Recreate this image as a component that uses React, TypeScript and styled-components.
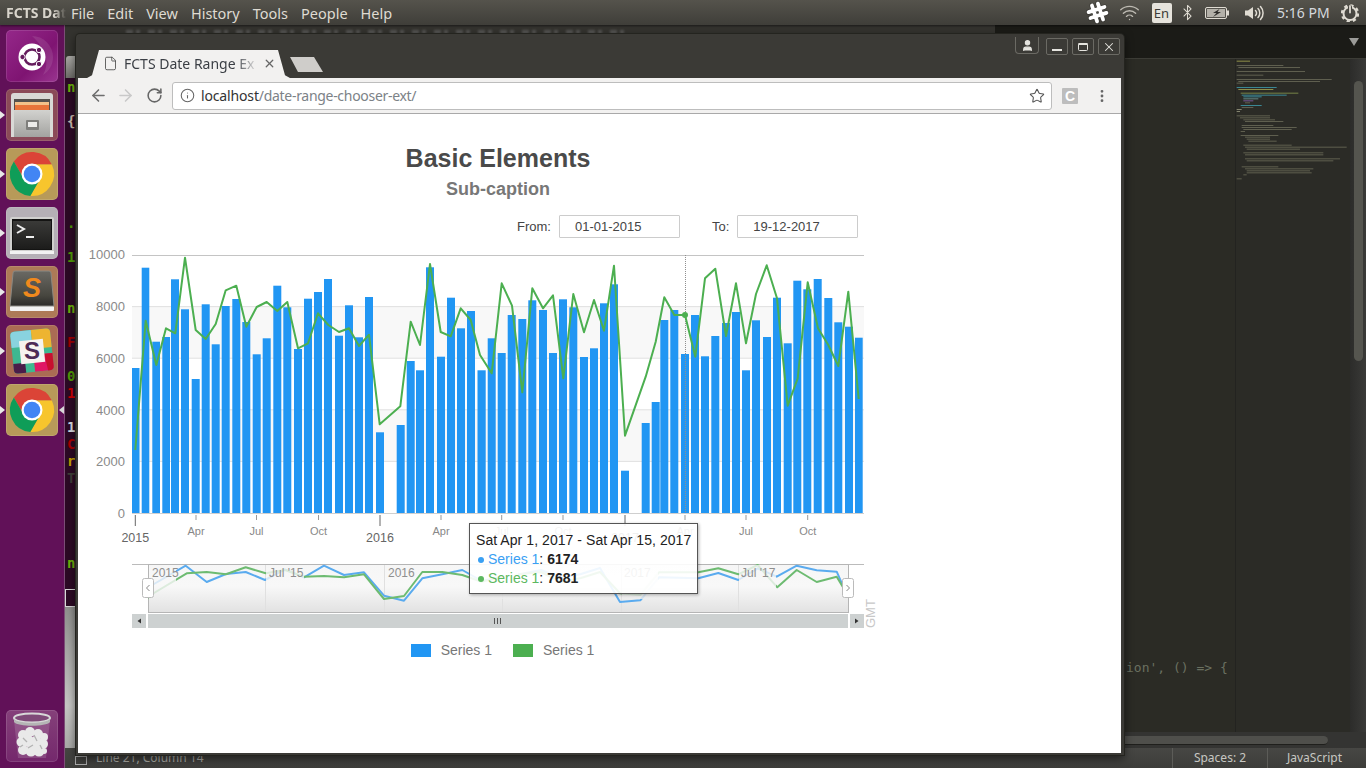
import React from 'react';
import styled, { createGlobalStyle } from 'styled-components';
import { ArrowLeft, ArrowRight, RotateCw, Info, Star, EllipsisVertical, File as FileIcon, X, User, Wifi, Bluetooth } from 'lucide-react';

const Global = createGlobalStyle`
  html, body { margin: 0; padding: 0; width: 1366px; height: 768px; overflow: hidden; background: #2a2a25; }
  * { box-sizing: border-box; }
`;

const Screen = styled.div`
  width: 1366px; height: 768px; display: flex; flex-direction: column; position: relative; overflow: hidden;
  font-family: "Noto Sans", sans-serif;
`;
const TopBar = styled.header`
  height: 25px; flex: none; display: flex; align-items: center; color: #dfdbd2; font-size: 14.5px;
  background: linear-gradient(#55534c, #3f3e39);
  box-shadow: 0 1px 2px rgba(0,0,0,.5); position: relative; z-index: 3;
`;
const AppName = styled.div`
  width: 66px; margin-right: 5px; padding-left: 6px; font-weight: 700; font-size: 14px; overflow: hidden; white-space: nowrap; color: #d8d4cb;
  -webkit-mask-image: linear-gradient(90deg, #000 82%, transparent 100%);
`;
const Menu = styled.nav` display: flex; gap: 13px; `;
const Tray = styled.div` margin-left: auto; display: flex; align-items: center; height: 25px; padding-right: 6px; `;
const TrayIcon = styled.span<{ $w: number; $ml?: number }>`
  width: ${p => p.$w}px; margin-left: ${p => p.$ml || 0}px; flex: none; display: flex; justify-content: center; align-items: center; color: #dfdbd2;
`;
const Lang = styled.span`
  width: 20px; height: 20px; margin: 0 6px 0 2px; background: #e6e3dc; color: #3c3b37; border-radius: 2px;
  font-size: 13px; line-height: 20px; text-align: center;
`;
const Clock = styled.span` width: 52px; margin: 0 11px 0 13px; font-size: 14px; white-space: nowrap; color: #d5d9de; `;

const Body = styled.div` flex: 1; display: flex; min-height: 0; `;
const Dock = styled.aside`
  width: 65px; flex: none; background: #611158; border-right: 1px solid #7c4d76;
  display: flex; flex-direction: column; padding: 5px 0 6px 6px; gap: 7px;
`;
const DockTile = styled.div<{ $bg: string }>`
  width: 52px; height: 52px; border-radius: 5px; background: ${p => p.$bg}; position: relative; flex: none;
  box-shadow: inset 0 0 0 1px rgba(255,255,255,.12);
  svg { display: block; }
`;
const TrashTile = styled(DockTile)` margin-top: auto; `;
const PipLeft = styled.i`
  position: absolute; left: -6px; top: 22px; width: 0; height: 0;
  border-top: 4px solid transparent; border-bottom: 4px solid transparent; border-left: 5px solid #e8e8e8;
`;
const PipRight = styled.i`
  position: absolute; right: -6px; top: 22px; width: 0; height: 0;
  border-top: 4px solid transparent; border-bottom: 4px solid transparent; border-right: 5px solid #d8d8d8;
`;

const Desk = styled.main` flex: 1; display: flex; flex-direction: column; min-width: 0; position: relative; `;
const DeskRow = styled.div` flex: 1; display: flex; min-height: 0; `;
const Terminal = styled.section` width: 930px; flex: none; display: flex; flex-direction: column; background: #2c0a25; `;
const TerminalHead = styled.div`
  height: 53px; flex: none; background: #34332f; display: flex; flex-direction: column; justify-content: space-between; padding: 5px 0 0 1px;
`;
const TerminalTitle = styled.div`
  width: 500px; height: 4px; margin-left: 60px; opacity: .5; filter: blur(.8px);
  background: repeating-linear-gradient(90deg, #777 0 7px, transparent 7px 10px, #777 10px 14px, transparent 14px 22px);
`;
const TerminalTab = styled.div` width: 11px; height: 22px; background: linear-gradient(#a9a8a4, #6d6c68); border-radius: 3px 0 0 0; `;
const TermLines = styled.pre`
  margin: 0; padding: 1px 0 0 2px; font: 700 14px/17px "DejaVu Sans Mono", monospace; height: 511px; flex: none; overflow: hidden;
`;
const TermLine = styled.div<{ $c?: string }>` height: 17px; color: ${p => p.$c || '#4e9a06'}; `;
const TermCursor = styled.div` width: 11px; height: 18px; border: 1px solid #d8d8d8; flex: none; `;
const TermScroll = styled.div` flex: 1; background: linear-gradient(#8f8f8d, #c6c6c4 70%, #a9a9a7); `;

const Editor = styled.section` flex: 1; display: flex; flex-direction: column; min-width: 0; `;
const EditorTabs = styled.div`
  height: 34px; flex: none; background: #1b1b17; border-bottom: 1px solid #3c3c36; display: flex; align-items: center; justify-content: flex-end; padding-right: 7px;
`;
const TabsArrow = styled.i`
  width: 0; height: 0; border-left: 5px solid transparent; border-right: 5px solid transparent; border-top: 8px solid #9b9b98;
`;
const EditorMain = styled.div` flex: 1; display: flex; min-height: 0; `;
const CodeCol = styled.div`
  flex: 1; background: #2b2b25; padding: 600px 0 0 131px; color: #6a7060; white-space: nowrap; overflow: hidden;
  font: 13px/17px "DejaVu Sans Mono", monospace; border-right: 1px solid #232320;
`;
const MiniMap = styled.div` width: 114px; flex: none; background: #2b2b26; svg { display: block; filter: blur(.4px); opacity: .8; } `;
const VScroll = styled.div` width: 16px; flex: none; background: linear-gradient(90deg, #2c2c2a, #3a3a38); padding: 22px 3px 0 4px; `;
const VThumb = styled.div` height: 280px; border-radius: 5px; background: #55554f; `;
const HScroll = styled.div` height: 16px; flex: none; background: #343432; padding: 4px 38px 0 0; `;
const HThumb = styled.div` height: 9px; border-radius: 0 5px 5px 0; background: #4f4f4b; border-bottom: 1px solid #1f1f1c; `;
const StatusBar = styled.footer`
  height: 20px; flex: none; display: flex; align-items: stretch; background: linear-gradient(#474744, #3d3d3a);
  color: #c7c7c2; font-size: 12px; line-height: 20px; padding-left: 10px;
`;
const StatusIcon = styled.span` width: 12px; height: 9px; border: 1px solid #aaa; margin: 8px 9px 0 0; `;
const StatusText = styled.span` color: #a7a7a2; `;
const StatusCell = styled.span<{ $w: number; $auto?: boolean; $pr?: number }>`
  width: ${p => p.$w}px; padding-right: ${p => p.$pr || 0}px; text-align: center; border-left: 1px solid #5c5c58; ${p => p.$auto ? 'margin-left: auto;' : ''}
`;

const Win = styled.section`
  position: absolute; left: 11px; top: 9px; width: 1048px; height: 721px;
  background: #3b3a36; border: 2px solid #3b3a36; border-right-width: 3px; border-radius: 4px 4px 0 0;
  box-shadow: 0 0 0 1px #24241f, 0 3px 10px rgba(0,0,0,.6);
  display: flex; flex-direction: column;
`;
const TabRow = styled.div` height: 42px; flex: none; display: flex; align-items: flex-end; padding-left: 9px; `;
const Tab = styled.div`
  width: 203px; height: 28px; background: #f2f1f0; color: #3b3f45; font-size: 14px; display: flex; align-items: center; padding: 0 0 2px 16px;
  clip-path: polygon(0 100%, 5px 90%, 12px 0, 191px 0, 198px 90%, 100% 100%);
`;
const TabTitle = styled.span`
  width: 131px; margin-left: 6px; overflow: hidden; white-space: nowrap;
  -webkit-mask-image: linear-gradient(90deg, #000 85%, rgba(0,0,0,.15) 100%);
`;
const TabClose = styled.span` margin-left: 8px; display: flex; color: #666; `;
const NewTab = styled.div`
  width: 33px; height: 15px; margin: 0 0 6px 0; background: #cfcdca;
  clip-path: polygon(0 0, 24px 0, 100% 100%, 8px 100%);
`;
const WinButtons = styled.div` margin-left: auto; align-self: flex-start; display: flex; padding: 2px 1px 0 0; gap: 4px; `;
const WinBtn = styled.button`
  width: 22px; height: 17px; padding: 0; margin: 0; background: #3b3a36; color: #e5e4df; border: 1px solid #6b6a64; border-radius: 2px;
  display: flex; align-items: center; justify-content: center;
`;
const ProfileBtn = styled(WinBtn)` width: 24px; height: 17px; margin: -1px 3px 0 0; border-top: 0; border-radius: 0 0 4px 4px; `;
const Toolbar = styled.div`
  height: 36px; flex: none; background: #f2f1f0; border-bottom: 1px solid #a9a9a9; display: flex; align-items: center; padding-left: 10px;
`;
const NavBtn = styled.span<{ $c: string; $ml: number }>`
  width: 20px; height: 20px; display: flex; align-items: center; justify-content: center; color: ${p => p.$c}; margin-left: ${p => p.$ml}px;
`;
const Omni = styled.div`
  width: 880px; height: 28px; margin-left: 8px; background: #fff; border: 1px solid #bdbdbd; border-radius: 3px; display: flex; align-items: center; padding: 0 6px 0 7px; color: #666;
  font-size: 14px;
`;
const Host = styled.span` margin-left: 6px; color: #333; letter-spacing: -.15px; `;
const Path = styled.span` color: #7c8287; letter-spacing: -.3px; `;
const OmniStar = styled.span` margin-left: auto; display: flex; color: #555; `;
const ExtC = styled.span`
  width: 16px; height: 16px; margin-left: 10px; background: #bdbdbd; color: #fff; font: 700 14px/16px "Liberation Sans", sans-serif; text-align: center; border-radius: 1px;
`;
const Page = styled.div`
  flex: 1; background: #fff; font-family: "Liberation Sans", Arial, sans-serif; position: relative; min-height: 0;
`;
const ChartBox = styled.div` width: 840px; display: flex; flex-direction: column; padding-top: 29px; position: relative; `;
const Caption = styled.h1` margin: 0; font: 700 25px/30px "Liberation Sans", sans-serif; color: #4a4a4a; text-align: center; `;
const SubCaption = styled.h2` margin: 5px 0 0; font: 700 18px/22px "Liberation Sans", sans-serif; color: #777; text-align: center; `;
const Range = styled.div` margin-top: 15px; height: 23px; display: flex; align-items: center; font-size: 13px; color: #444; padding-left: 439px; `;
const RangeInput = styled.div<{ $ml: number }>`
  width: 121px; height: 23px; margin-left: ${p => p.$ml}px; border: 1px solid #ccc; border-radius: 1px; padding-left: 15px; line-height: 22px; color: #444;
`;
const RangeLabel = styled.span<{ $ml?: number }>` margin-left: ${p => p.$ml || 0}px; `;
const ChartSvg = styled.svg` display: block; margin-top: 7px; font-family: "Liberation Sans", sans-serif; `;
const Legend = styled.div` margin-top: 8px; height: 14px; display: flex; justify-content: center; gap: 21px; padding-left: 9px; font-size: 14px; color: #777; line-height: 14px; `;
const LegendItem = styled.div` display: flex; align-items: center; gap: 10px; `;
const Swatch = styled.i<{ $c: string }>` width: 20px; height: 13px; background: ${p => p.$c}; display: block; `;
const Tooltip = styled.div`
  position: absolute; left: 391px; top: 409px; width: 229px; height: 71px; padding: 6px 0 0 6px;
  background: rgba(255,255,255,.9); border: 1px solid #555; box-shadow: 1px 1px 3px rgba(0,0,0,.3);
  font-size: 14px; line-height: 19.5px; color: #222; white-space: nowrap;
`;
const TipHead = styled.div` height: 19.5px; padding-top: 1px; letter-spacing: .06px; `;
const TipRow = styled.div` display: flex; align-items: center; `;
const TipDot = styled.i<{ $c: string }>` width: 6px; height: 6px; border-radius: 50%; background: ${p => p.$c}; margin: 1px 4px 0 2px; `;
const TipName = styled.span<{ $c: string }>` color: ${p => p.$c}; `;
const TipValue = styled.b` color: #222; margin-left: 4px; `;

const BLUE = '#2196f3';
const GREEN = '#4caf50';
const bars: [number, number, number][] = [
  [132, 139.5, 368], [141.7, 149.3, 267.7], [152.3, 160, 341.7], [162.3, 170, 337], [171, 179, 279.3], [181, 189, 309.3], [191.7, 199.7, 379], [201.7, 209.7, 304.3], [211.7, 219.7, 344.3], [221.7, 229.7, 306],
  [232.3, 240.3, 299], [242.3, 250.3, 322], [252.7, 260.7, 354.3], [262.7, 270.7, 338.3], [273.3, 281.3, 285.7], [283.3, 291.3, 307.3], [294, 302, 349], [304, 312, 298.7], [314, 322, 292], [324, 332, 279],
  [335, 343, 335.7], [345, 353, 305.3], [355, 363, 337.3], [365, 373, 297], [376, 384, 432.3], [396.7, 404.7, 425], [406.7, 414.7, 361], [416, 424, 370.3], [426, 434, 267.3], [437, 445, 356.7],
  [447, 455, 297.7], [457, 465, 328.3], [467, 475, 311], [477.5, 485.7, 370.3], [487.7, 495.7, 338.3], [497.7, 505.7, 353], [507.7, 515.7, 315], [518.3, 526.3, 319], [528.3, 536.3, 300.3], [539, 547, 310],
  [549, 557, 353], [559, 567, 299.3], [569.3, 577.3, 307.3], [580, 588, 357], [590, 598, 348.3], [600, 608, 303.3], [610, 618, 284.3], [621, 629, 470.7], [641.7, 649.7, 423], [651.7, 659.7, 402],
  [660.3, 668.3, 320], [670.3, 678.3, 310], [681, 689, 354], [691, 699, 315], [701, 709, 356.3], [711.3, 719.3, 336], [722, 730, 323], [732, 740, 312], [742, 750, 370.3], [752, 760, 320.3],
  [763, 771, 337], [773, 781, 297.7], [783.7, 791.7, 343.3], [793.3, 801.3, 280.7], [803.3, 811.3, 289.3], [813.7, 821.7, 279], [824.3, 832.3, 298], [834.3, 842.3, 322.3], [845, 853, 326.7], [855, 862.7, 337.7],
];
const line = '135.3,450 145.7,320.7 156.3,365 166,328.3 175.3,333.3 185,257.7 195.7,330 205.7,339 215.7,324 225.7,290.3 236.3,285.7 246.3,326.7 256.7,307 266.7,302 277.3,311 287.3,302 298,348.3 308,343.3 318,313.3 328.3,325 339,332 349,328.3 359,346 369,334.7 379.7,424.3 400.3,406.3 410.7,321.7 420,345 430,264 440.7,332 450.7,336.3 460.7,308.3 470.7,320 480,355 491.7,373.3 501.7,283.3 512,305.7 522.3,392.3 532.3,288.3 543,308.3 553,295.3 563.3,378.3 573.3,294 584,332.3 594,300 604,330.7 614,265.7 625,435.7 645.7,376.7 655.7,341.7 664.3,297.3 674.3,315 685,315 695.3,356.7 705,278.3 715.3,268.7 726,336 736,283.3 746,343.3 756,294 766.7,265.3 777,298.3 787.7,405.7 797.7,378.3 807.7,282.3 818,328.3 828.3,345 838.3,366 848.3,291.7 858.7,399';
const navBlue = '148,588 154,584 185.7,565.7 206.7,582 226,574 245.7,572 265,580 285,569.3 304,577.3 324,565.7 344,575 364,572.3 384,595.7 404,600.7 422.3,578.3 442.3,574.3 462.3,570 481.7,581 501,577 521,574 541,570 561,578 581,574 600,568 620,602 640.3,600.3 659,577.3 698.3,578.3 718.3,573 738.3,580 757.7,568.3 776.7,576.7 796.7,565.7 816.7,570.3 836.7,571.7 843.3,586.7';
const navGreen = '148,598 154,593 186.7,573.3 206.7,572 226,574.3 245.7,567.3 265.7,573.3 285,570 304,576.7 324,576 344,577.3 364,574.3 384,599 404,596 422.3,572 442.3,572 462.3,575 481.7,581.7 501,577 521,574 541,572 561,582 581,578 600,572 620,593.3 640.3,595 659,572.3 698.3,572.3 718.3,568.3 738.3,574.3 757.7,565 777.3,587.3 796.7,570 816.7,582 836.7,576.7 842.7,586.7';

const gridY = [306.6, 358.2, 409.8, 461.4];
const minorTicks: [number, string][] = [[196, 'Apr'], [256.5, 'Jul'], [318.5, 'Oct'], [441, 'Apr'], [501.7, 'Jul'], [563, 'Oct'], [685, 'Apr'], [746, 'Jul'], [807.7, 'Oct']];
const majorTicks: [number, string][] = [[135.3, '2015'], [380, '2016'], [625, '2017']];

function Chart() {
  return (
    <ChartSvg width={840} height={390} viewBox="78 245 840 390">
      <defs>
        <linearGradient id="navBg" gradientUnits="userSpaceOnUse" x1="0" x2="0" y1="565" y2="612">
          <stop offset="0" stopColor="#f6f6f6" />
          <stop offset=".45" stopColor="#f8f8f8" />
          <stop offset="1" stopColor="#e2e2e2" />
        </linearGradient>
      </defs>
      <rect x={132} y={306.6} width={732} height={51.6} fill="#f8f8f8" />
      <rect x={132} y={409.8} width={732} height={51.6} fill="#f8f8f8" />
      {gridY.map(y => <line key={y} x1={132} x2={864} y1={y} y2={y} stroke="#e0e0e0" />)}
      <line x1={132} x2={864} y1={255.5} y2={255.5} stroke="#c4c4c4" />
      {[[10000, 258.5], [8000, 311], [6000, 362.5], [4000, 414.5], [2000, 466], [0, 518]].map(([v, y]) => (
        <text key={v} x={125} y={y} textAnchor="end" fontSize={13} fill="#8a8a8a">{v}</text>
      ))}
      {bars.map(([a, b, t]) => <rect key={a} x={a} y={t} width={b - a} height={513 - t} fill={BLUE} />)}
      <line x1={132} x2={864} y1={513.5} y2={513.5} stroke="#cfcfcf" />
      <line x1={685.5} x2={685.5} y1={255} y2={513} stroke="#8f8f8f" strokeDasharray="1 1" />
      <polyline points={line} fill="none" stroke={GREEN} strokeWidth={2} strokeLinejoin="round" />
      <circle cx={685} cy={315} r={3} fill={GREEN} />
      {minorTicks.map(([x, l]) => (
        <g key={x}>
          <line x1={x} x2={x} y1={515} y2={520} stroke="#999" />
          <text x={x} y={535} textAnchor="middle" fontSize={11} fill="#888">{l}</text>
        </g>
      ))}
      {majorTicks.map(([x, l]) => (
        <g key={x}>
          <line x1={x} x2={x} y1={515} y2={526} stroke="#666" />
          <text x={x} y={542} textAnchor="middle" fontSize={12.5} fill="#666">{l}</text>
        </g>
      ))}
      <line x1={132} x2={864} y1={564.5} y2={564.5} stroke="#bbb" />
      <rect x={148.5} y={564.5} width={700} height={48} fill="url(#navBg)" stroke="#b5b5b5" />
      {[265, 384, 502, 621, 738].map(x => <line key={x} x1={x + .5} x2={x + .5} y1={565} y2={612} stroke="#e0e0e0" />)}
      <polyline points={navBlue} fill="none" stroke="#5aabef" strokeWidth={2} strokeLinejoin="round" />
      <polyline points={navGreen} fill="none" stroke="#6dbb71" strokeWidth={2} strokeLinejoin="round" />
      {[[149, 27], [266, 38], [502, 16], [622, 36], [739, 37]].map(([x, w]) => (
        <rect key={x} x={x} y={565} width={w} height={34} fill="url(#navBg)" opacity={.8} />
      ))}
      {[[152, '2015'], [269, "Jul '15"], [388, '2016'], [624, '2017'], [741, "Jul '17"]].map(([x, l]) => (
        <text key={x} x={x} y={577} fontSize={12} fill="#8f8f8f">{l}</text>
      ))}
      <rect x={142.5} y={578.5} width={11} height={19} rx={2} fill="#fff" stroke="#bbb" />
      <path d="M149.5 585l-3 3 3 3" fill="none" stroke="#888" />
      <rect x={842.5} y={578.5} width={11} height={19} rx={2} fill="#fff" stroke="#bbb" />
      <path d="M846.5 585l3 3-3 3" fill="none" stroke="#888" />
      <rect x={132} y={614} width={14} height={14} fill="#cdd1d1" />
      <path d="M141 618.5v5l-3.5-2.5z" fill="#333" />
      <rect x={148} y={614} width={700} height={14} fill="#cdd1d1" />
      <path d="M494.5 618v6M497.5 618v6M500.5 618v6" stroke="#555" />
      <rect x={850} y={614} width={14} height={14} fill="#cdd1d1" />
      <path d="M855 618.5v5l3.5-2.5z" fill="#333" />
      <text x={875} y={628} fontSize={13} fill="#c8c8c8" transform="rotate(-90 875 628)">GMT</text>
    </ChartSvg>
  );
}

const ChromeLogo = () => (
  <g transform="translate(26 26)">
    {[[0, '#db4437'], [120, '#f7c52d'], [240, '#0f9d58']].map(([a, c]) => (
      <path key={String(a)} transform={`rotate(${a})`} fill={String(c)} d="M0,-9.5 L19.85,-9.5 A22,22 0 0 0 -18.16,-12.44 L-8.23,4.75 Z" />
    ))}
    <circle r={10.5} fill="#fff" />
    <circle r={8.3} fill="#4285f4" />
  </g>
);
const minimapLines: [number, number, number, string][] = [
  [92, 350, 390, '#a8a850'], [105, 350, 490, '#6d6d5a'], [111, 355, 540, '#6d6d5a'], [123, 350, 555, '#6d6d5a'], [134, 350, 430, '#6d6d5a'], [147, 350, 635, '#6d6d5a'], [153, 355, 600, '#6d6d5a'], [158, 350, 370, '#6d6d5a'],
  [171, 350, 470, '#3f9fb0'], [177, 355, 460, '#a8a850'], [188, 362, 535, '#8a9a50'], [194, 365, 500, '#3f9fb0'], [199, 370, 425, '#3f9fb0'], [205, 370, 415, '#6fa0a0'], [211, 370, 400, '#8a62b0'], [217, 375, 390, '#6d6d5a'], [225, 362, 425, '#3f9fb0'], [231, 365, 400, '#6d6d5a'], [237, 350, 365, '#9a9a80'], [243, 350, 360, '#9a9a80'],
  [256, 350, 450, '#6d6d5a'], [262, 360, 450, '#6d6d5a'], [268, 370, 465, '#6d6d5a'], [273, 375, 490, '#6d6d5a'], [285, 365, 460, '#6d6d5a'], [291, 365, 530, '#6d6d5a'], [297, 370, 515, '#6d6d5a'], [303, 362, 375, '#6d6d5a'], [315, 362, 475, '#6d6d5a'], [320, 375, 450, '#6d6d5a'], [326, 380, 450, '#6d6d5a'], [332, 385, 470, '#6d6d5a'],
  [344, 370, 515, '#6d6d5a'], [350, 375, 680, '#6d6d5a'], [356, 380, 540, '#6d6d5a'], [367, 370, 610, '#6d6d5a'], [373, 375, 610, '#6d6d5a'], [385, 375, 660, '#6d6d5a'], [391, 380, 640, '#6d6d5a'], [409, 365, 475, '#6d6d5a'], [415, 375, 580, '#6d6d5a'], [421, 380, 570, '#6d6d5a'], [427, 380, 575, '#6d6d5a'], [433, 370, 380, '#6d6d5a'], [445, 350, 365, '#6d6d5a'],
];
const termLines: Record<number, [string, string]> = {
  0: ['n', '#6cb30a'], 2: ['{', '#c9b8a8'], 8: ['.', '#4e9a06'], 10: ['1', '#4e9a06'], 13: ['n', '#6cb30a'], 15: ['F', '#a00000'], 17: ['0', '#4e9a06'], 18: ['1', '#cc0000'], 20: ['1', '#d8dbe0'], 21: ['C', '#aa0000'], 22: ['r', '#c4a000'], 23: ['T', '#3f3f38'], 28: ['n', '#6cb30a'],
};
const paper: [number, number, number][] = [[17, 25, 5], [24, 22, 5], [32, 24, 5], [38, 27, 4], [15, 32, 4.5], [22, 31, 6], [30, 32, 6], [37, 34, 5], [17, 40, 5], [25, 41, 5.5], [33, 41, 5.5], [38, 41, 3]];

export default function App() {
  return (
    <Screen>
      <Global />
      <TopBar>
        <AppName>FCTS Dat</AppName>
        <Menu>
          {['File', 'Edit', 'View', 'History', 'Tools', 'People', 'Help'].map(m => <span key={m}>{m}</span>)}
        </Menu>
        <Tray>
          <TrayIcon $w={24}>
            <svg width="23" height="23" viewBox="0 0 22 22">
              <g transform="rotate(-18 11 11)" strokeLinecap="round">
                <path d="M8 3v16M14 3v16M3 8h16M3 14h16" stroke="#2c2b28" strokeWidth="5" opacity=".5" />
                <path d="M8 3v16M14 3v16M3 8h16M3 14h16" stroke="#fff" strokeWidth="3.6" />
              </g>
            </svg>
          </TrayIcon>
          <TrayIcon $w={40}><Wifi size={21} strokeWidth={1.6} color="#bdbab2" /></TrayIcon>
          <Lang>En</Lang>
          <TrayIcon $w={20}><Bluetooth size={17} strokeWidth={1.5} /></TrayIcon>
          <TrayIcon $w={38}>
            <svg width="24" height="12" viewBox="0 0 24 12">
              <rect x=".5" y=".5" width="21" height="11" rx="1.5" fill="#55534d" stroke="#dfdbd2" />
              <rect x="22" y="3.5" width="2" height="5" fill="#dfdbd2" />
              <rect x="2" y="2" width="18" height="8" fill="#b4b1a9" />
              <path d="M14.5 2L8 6h3.5L8 10l8-5h-3.5z" fill="#2f2e2b" />
            </svg>
          </TrayIcon>
          <TrayIcon $w={20} $ml={8.5}>
            <svg width="20" height="18" viewBox="0 0 20 18" fill="none" stroke="#dfdbd2" strokeWidth="1.5" strokeLinecap="round">
              <path d="M1 6.5h3L9 3v12l-5-3.5H1z" fill="#dfdbd2" stroke="none" />
              <path d="M11.5 6.5a3.5 3.5 0 0 1 0 5" />
              <path d="M14 4.5a6.5 6.5 0 0 1 0 9" />
              <path d="M16.5 2.5a9.5 9.5 0 0 1 0 13" />
            </svg>
          </TrayIcon>
          <Clock>5:16 PM</Clock>
          <TrayIcon $w={20}>
            <svg width="18" height="18" viewBox="0 0 18 18" fill="none" stroke="#dfdbd2" strokeLinecap="round">
              <circle cx="9" cy="9.5" r="6.5" strokeWidth="2" />
              <circle cx="9" cy="9.5" r="8" strokeWidth="2.4" strokeDasharray="3.2 3.1" strokeLinecap="butt" />
              <path d="M9 3v6" stroke="#45443f" strokeWidth="4" />
              <path d="M9 2v6.5" strokeWidth="1.8" />
            </svg>
          </TrayIcon>
        </Tray>
      </TopBar>
      <Body>
        <Dock>
          <DockTile $bg="linear-gradient(135deg,#95288a,#7f1472 60%,#9a3590)">
            <svg width="52" height="52" viewBox="0 0 52 52">
              <path d="M26 6a21 21 0 0 1 21 21c0 8-4 14-10 18 6-10 5-24-11-39z" fill="#fff" opacity=".1" />
              <circle cx="26" cy="27" r="13.5" fill="#fff" />
              <circle cx="26" cy="27" r="7.5" fill="none" stroke="#651c5d" strokeWidth="2.6" />
              <circle cx="33" cy="20" r="2.7" fill="#651c5d" stroke="#fff" />
              <circle cx="16.5" cy="27" r="2.7" fill="#651c5d" stroke="#fff" />
              <circle cx="33" cy="34" r="2.7" fill="#651c5d" stroke="#fff" />
            </svg>
          </DockTile>
          <DockTile $bg="#8b4a58">
            <PipLeft />
            <svg width="52" height="52" viewBox="0 0 52 52">
              <defs>
                <linearGradient id="drawer" x1="0" x2="0" y1="0" y2="1"><stop offset="0" stopColor="#d2d2cf" /><stop offset="1" stopColor="#a3a3a0" /></linearGradient>
              </defs>
              <path d="M5 7a3 3 0 0 1 3-3h36a3 3 0 0 1 3 3v41H5z" fill="#d9d9d6" />
              <rect x="8" y="10" width="36" height="12" fill="#55524e" />
              <rect x="9" y="13" width="34" height="3" fill="#f3c28a" />
              <rect x="9" y="16" width="34" height="5" fill="#e8743a" />
              <rect x="8" y="21" width="36" height="27" fill="url(#drawer)" />
              <rect x="20" y="31" width="13" height="10" rx="1" fill="#7f7f7c" />
              <rect x="22" y="33" width="9" height="5" fill="#ececea" />
            </svg>
          </DockTile>
          <DockTile $bg="#b79a59"><PipLeft /><svg width="52" height="52" viewBox="0 0 52 52"><ChromeLogo /></svg></DockTile>
          <DockTile $bg="#b5b0b6">
            <PipLeft />
            <svg width="52" height="52" viewBox="0 0 52 52">
              <defs>
                <linearGradient id="tscreen" x1="0" x2="0" y1="0" y2="1"><stop offset="0" stopColor="#3a3a38" /><stop offset="1" stopColor="#1c1c1b" /></linearGradient>
              </defs>
              <rect x="4" y="10" width="44" height="37" rx="2" fill="#d0d0ce" />
              <rect x="4" y="44" width="44" height="3" fill="#f2f2f2" />
              <rect x="6" y="12" width="40" height="31" fill="#141413" />
              <rect x="7" y="14" width="38" height="28" fill="url(#tscreen)" />
              <path d="M11 18l7 4-7 4" fill="none" stroke="#eee" strokeWidth="2" />
              <path d="M20 30h8" stroke="#eee" strokeWidth="2" />
            </svg>
          </DockTile>
          <DockTile $bg="#ad7a57">
            <PipLeft />
            <svg width="52" height="52" viewBox="0 0 52 52">
              <defs>
                <linearGradient id="subl" x1="0" x2="0" y1="0" y2="1"><stop offset="0" stopColor="#6a6964" /><stop offset=".7" stopColor="#47463f" /><stop offset="1" stopColor="#2b2a28" /></linearGradient>
              </defs>
              <rect x="4" y="40" width="44" height="5" rx="1" fill="#f2f2f2" />
              <path d="M9 5h34a2 2 0 0 1 2 2l3 33H4l3-33a2 2 0 0 1 2-2z" fill="url(#subl)" stroke="#8a8983" />
              <text x="26" y="31" textAnchor="middle" fontFamily="Liberation Sans, sans-serif" fontWeight="700" fontStyle="italic" fontSize="27" fill="#f0891d">S</text>
            </svg>
          </DockTile>
          <DockTile $bg="#aa6c54">
            <PipLeft />
            <svg width="52" height="52" viewBox="0 0 52 52">
              <g transform="rotate(-6 26 26)">
                <rect x="6" y="5" width="40" height="42" rx="4" fill="#3eb890" />
                <path d="M6 9a4 4 0 0 1 4-4h17v16H6z" fill="#89d3df" />
                <path d="M27 5h15a4 4 0 0 1 4 4v15H27z" fill="#edb431" />
                <path d="M27 30h19v13a4 4 0 0 1-4 4H27z" fill="#e01765" />
                <path d="M38 30h8v13a4 4 0 0 1-4 4h-2z" fill="#c8102e" />
                <path d="M6 37h12v10h-8a4 4 0 0 1-4-4z" fill="#4a1d4a" />
                <rect x="14" y="15" width="24" height="23" fill="#f6f3ef" />
              </g>
              <text x="26" y="34" textAnchor="middle" fontFamily="Liberation Sans, sans-serif" fontWeight="700" fontSize="24" fill="#4d2a55">S</text>
            </svg>
          </DockTile>
          <DockTile $bg="#b79a59"><PipLeft /><PipRight /><svg width="52" height="52" viewBox="0 0 52 52"><ChromeLogo /></svg></DockTile>
          <TrashTile $bg="linear-gradient(#85407a,#74286c)">
            <svg width="52" height="52" viewBox="0 0 52 52">
              <path d="M8 10l4 38h28l4-38z" fill="#fff" opacity=".14" />
              {paper.map(([x, y, r]) => <circle key={`${x}-${y}`} cx={x} cy={y} r={r} fill="#e9e9e9" />)}
              <path d="M17 28l4 4M28 25l3 6M22 38l5-3M34 35l2 4M14 37l3-2" stroke="#b2b2b2" strokeWidth="1.3" />
              <ellipse cx="26" cy="8" rx="18" ry="4.5" fill="#7f4a78" stroke="#d8d8d8" strokeWidth="2" />
              <path d="M8 9c4 5 32 5 36 0v3c-4 5-32 5-36 0z" fill="#b5b5b5" />
            </svg>
          </TrashTile>
        </Dock>
        <Desk>
          <DeskRow>
            <Terminal>
              <TerminalHead><TerminalTitle /><TerminalTab /></TerminalHead>
              <TermLines>
                {Array.from({ length: 30 }, (_, i) => (
                  <TermLine key={i} $c={termLines[i]?.[1]}>{termLines[i]?.[0] ?? ' '}</TermLine>
                ))}
              </TermLines>
              <TermCursor />
              <TermScroll />
            </Terminal>
            <Editor>
              <EditorTabs><TabsArrow /></EditorTabs>
              <EditorMain>
                <CodeCol>ion', () =&gt; {'{'}</CodeCol>
                <MiniMap>
                  <svg width="114" height="160" viewBox="1236 59 114 160">
                    {minimapLines.map(([zy, a, b, c]) => (
                      <rect key={zy} x={1120 + a / 3} y={30 + zy / 3} width={(b - a) / 3} height={1} fill={c} />
                    ))}
                  </svg>
                </MiniMap>
                <VScroll><VThumb /></VScroll>
              </EditorMain>
              <HScroll><HThumb /></HScroll>
            </Editor>
          </DeskRow>
          <StatusBar>
            <StatusIcon />
            <StatusText>Line 21, Column 14</StatusText>
            <StatusCell $w={95} $auto>Spaces: 2</StatusCell>
            <StatusCell $w={99} $pr={5}>JavaScript</StatusCell>
          </StatusBar>
          <Win>
            <TabRow>
              <Tab>
                <FileIcon size={15} strokeWidth={1.3} color="#444" />
                <TabTitle>FCTS Date Range Ex</TabTitle>
                <TabClose><X size={13} strokeWidth={2.4} /></TabClose>
              </Tab>
              <NewTab />
              <WinButtons>
                <ProfileBtn aria-label="Profile"><User size={13} fill="#e5e4df" strokeWidth={2} /></ProfileBtn>
                <WinBtn aria-label="Minimize">
                  <svg width="12" height="12" viewBox="0 0 12 12"><rect x="1" y="8" width="10" height="2" fill="#e5e4df" /></svg>
                </WinBtn>
                <WinBtn aria-label="Maximize">
                  <svg width="12" height="12" viewBox="0 0 12 12"><rect x="1.5" y="2.5" width="9" height="7" rx="1" fill="none" stroke="#e5e4df" /><rect x="1.5" y="2" width="9" height="2" fill="#e5e4df" /></svg>
                </WinBtn>
                <WinBtn aria-label="Close"><X size={14} strokeWidth={1.8} /></WinBtn>
              </WinButtons>
            </TabRow>
            <Toolbar>
              <NavBtn $c="#6e6e6e" $ml={0}><ArrowLeft size={19} strokeWidth={2} /></NavBtn>
              <NavBtn $c="#c9c9c9" $ml={7}><ArrowRight size={19} strokeWidth={2} /></NavBtn>
              <NavBtn $c="#666" $ml={9}><RotateCw size={17} strokeWidth={2.2} /></NavBtn>
              <Omni>
                <Info size={15} strokeWidth={1.7} />
                <Host>localhost</Host><Path>/date-range-chooser-ext/</Path>
                <OmniStar><Star size={16} strokeWidth={1.6} /></OmniStar>
              </Omni>
              <ExtC>C</ExtC>
              <NavBtn $c="#666" $ml={14}><EllipsisVertical size={16} strokeWidth={2.2} /></NavBtn>
            </Toolbar>
            <Page>
              <ChartBox>
                <Caption>Basic Elements</Caption>
                <SubCaption>Sub-caption</SubCaption>
                <Range>
                  <RangeLabel>From:</RangeLabel>
                  <RangeInput $ml={8}>01-01-2015</RangeInput>
                  <RangeLabel $ml={32}>To:</RangeLabel>
                  <RangeInput $ml={8}>19-12-2017</RangeInput>
                </Range>
                <Chart />
                <Legend>
                  <LegendItem><Swatch $c={BLUE} />Series 1</LegendItem>
                  <LegendItem><Swatch $c={GREEN} />Series 1</LegendItem>
                </Legend>
                <Tooltip>
                  <TipHead>Sat Apr 1, 2017 - Sat Apr 15, 2017</TipHead>
                  <TipRow><TipDot $c="#3aa0f3" /><TipName $c="#3aa0f3">Series 1</TipName>:<TipValue>6174</TipValue></TipRow>
                  <TipRow><TipDot $c="#5cb860" /><TipName $c="#5cb860">Series 1</TipName>:<TipValue>7681</TipValue></TipRow>
                </Tooltip>
              </ChartBox>
            </Page>
          </Win>
        </Desk>
      </Body>
    </Screen>
  );
}
